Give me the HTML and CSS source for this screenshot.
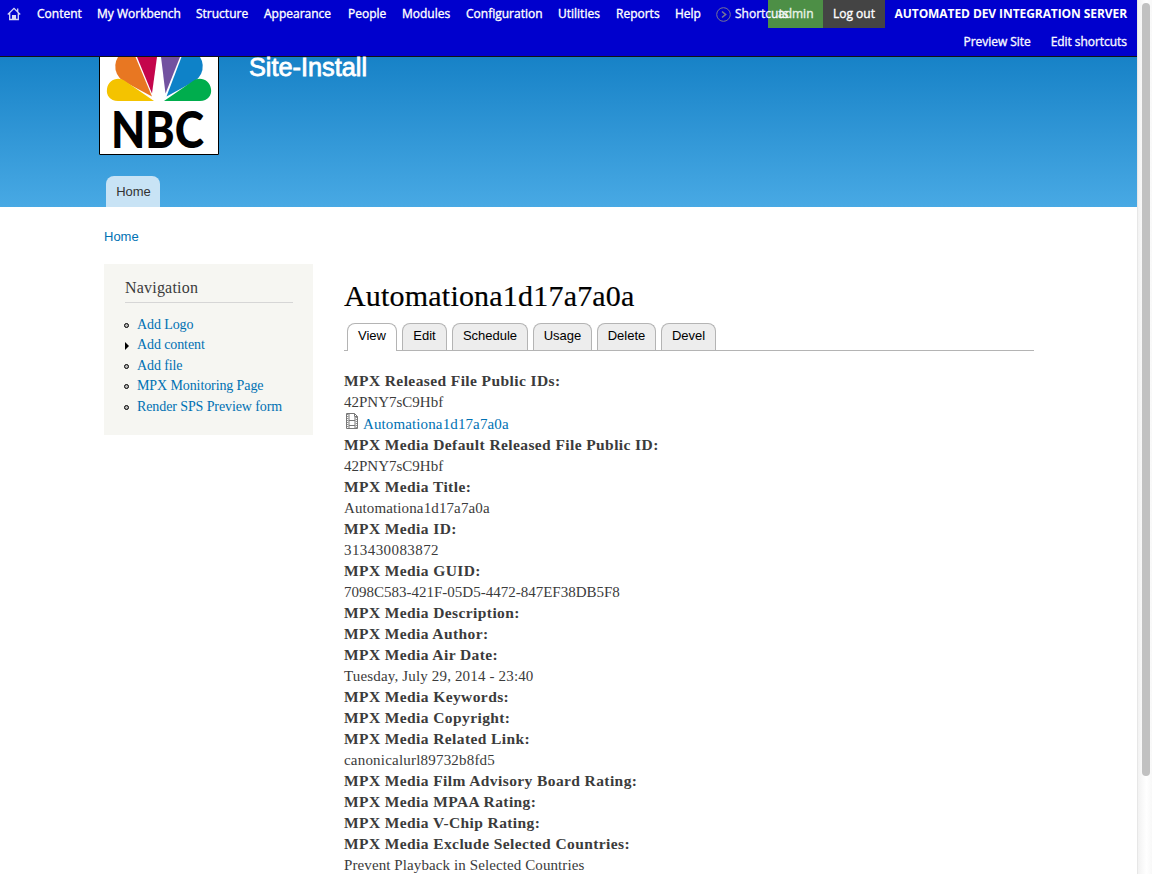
FILE: index.html
```html
<!DOCTYPE html>
<html lang="en">
<head>
<meta charset="utf-8">
<title>Automationa1d17a7a0a | Site-Install</title>
<link rel="stylesheet" href="styles.css">
</head>
<body>
<div class="window">
<div class="page">
  <div class="toolbar">
    <div class="toolbar-row">
      <a class="home" aria-label="Home"><svg width="14" height="14" viewBox="0 0 14 14" fill="none" stroke="#d8d8f5" stroke-width="1.3"><path d="M.8 7.5 7 1.4l6.2 6.1M2.7 6.3v6.2h8.6V6.3M10.7 4.8V1.6"/><path d="M5.6 12.4V8.6h2.8v3.8" fill="#d8d8f5"/></svg></a>
      <nav class="menu">
        <a class="m1">Content</a><a class="m2">My Workbench</a><a class="m3">Structure</a><a class="m4">Appearance</a><a class="m5">People</a><a class="m6">Modules</a><a class="m7">Configuration</a><a class="m8">Utilities</a><a class="m9">Reports</a><a class="m10">Help</a>
      </nav>
      <a class="shortcuts"><svg width="15" height="15" viewBox="0 0 15 15" fill="none" stroke="#777795"><circle cx="7.5" cy="7.5" r="6.8"/><path d="m6 4.5 3.6 3L6 10.5" stroke-width="1.6"/></svg><span>Shortcuts</span></a>
      <div class="user"><a class="admin">admin</a><a class="logout">Log out</a></div>
      <div class="server">AUTOMATED DEV INTEGRATION SERVER</div>
    </div>
    <div class="toolbar-row second"><a>Preview Site</a><a>Edit shortcuts</a></div>
  </div>
  <header class="header">
    <div class="brand">
      <svg class="logo" width="120" height="98" viewBox="0 0 120 98">
        <path fill="#fff" d="M0 0h120v98H0z"/>
        <path fill="#e87722" d="M19 0Q14 8 18 17Q20 21 24 24L53 39.500 36.500 0z"/>
        <path fill="#c4054c" d="M38 0h20l-5 36.500z"/>
        <path fill="#7252a0" d="M62 0h19L66.500 36.500z"/>
        <path fill="#0e82c8" d="M82.500 0H101Q106 8 102 17Q100 21 96 24L67.500 39.500z"/>
        <path fill="#f4c300" d="M55 44H19C11 44 7 38 8 32c1-9 11-13 18-8z"/>
        <path fill="#00ad4d" d="M65 44h36c8 0 12-6 11-12-1-9-11-13-18-8z"/>
        <text x="12" y="91" class="nbc" textLength="93" lengthAdjust="spacingAndGlyphs">NBC</text>
        <path fill="none" stroke="#000" d="M.5 0v97.500h119V0"/>
      </svg>
      <div class="site-name">Site-Install</div>
    </div>
    <a class="main-tab">Home</a>
  </header>
  <div class="breadcrumb"><a>Home</a></div>
  <div class="columns">
    <aside class="sidebar">
      <h2>Navigation</h2>
      <ul>
        <li>Add Logo</li>
        <li class="closed">Add content</li>
        <li>Add file</li>
        <li>MPX Monitoring Page</li>
        <li>Render SPS Preview form</li>
      </ul>
    </aside>
    <main class="content">
      <h1>Automationa1d17a7a0a</h1>
      <div class="tabs"><a class="active">View</a><a class="edit">Edit</a><a class="schedule">Schedule</a><a class="usage">Usage</a><a class="delete">Delete</a><a class="devel">Devel</a></div>
      <div class="fields">
        <b>MPX Released File Public IDs:</b>
        <p>42PNY7sC9Hbf</p>
        <p class="file"><svg width="14" height="17" viewBox="0 0 14 17" fill="none" stroke="#777"><path d="M1.500.500h8l3 3v12h-11zM9.500.500v3h3M4 1v14M10 4v11M4 7.500h6M4 12.500h6"/><path d="M2.700 1v14M11.300 4v11" stroke-dasharray="1 1"/></svg><a>Automationa1d17a7a0a</a></p>
        <b>MPX Media Default Released File Public ID:</b>
        <p>42PNY7sC9Hbf</p>
        <b>MPX Media Title:</b>
        <p class="auto">Automationa1d17a7a0a</p>
        <b>MPX Media ID:</b>
        <p class="num">313430083872</p>
        <b>MPX Media GUID:</b>
        <p>7098C583-421F-05D5-4472-847EF38DB5F8</p>
        <b>MPX Media Description:</b>
        <b>MPX Media Author:</b>
        <b>MPX Media Air Date:</b>
        <p class="date">Tuesday, July 29, 2014 - 23:40</p>
        <b>MPX Media Keywords:</b>
        <b>MPX Media Copyright:</b>
        <b>MPX Media Related Link:</b>
        <p class="url">canonicalurl89732b8fd5</p>
        <b>MPX Media Film Advisory Board Rating:</b>
        <b>MPX Media MPAA Rating:</b>
        <b>MPX Media V-Chip Rating:</b>
        <b>MPX Media Exclude Selected Countries:</b>
        <p class="prevent">Prevent Playback in Selected Countries</p>
      </div>
    </main>
  </div>
</div>
<div class="scrollbar"><div class="thumb"></div></div>
</div>
</body>
</html>
```

FILE: styles.css
```css
* { box-sizing: border-box; }
body { margin: 0; background: #fff; color: #3b3b3b; font-family: "Liberation Serif", serif; overflow: hidden; }
h1, h2, p, ul { margin: 0; padding: 0; font-weight: normal; }
.window { display: flex; height: 874px; overflow: hidden; }
.page { width: 1137px; }
.toolbar { height: 57px; background: #0000cd; border-bottom: 1px solid #111; color: #fff; font: 12px/28px "Open Sans", sans-serif; -webkit-text-stroke: .35px #fff; }
.toolbar-row { display: flex; height: 28px; white-space: nowrap; }
.home { width: 37px; padding: 7px 0 0 7px; line-height: 0; }
.menu { display: flex; width: 679px; }
.m1 { width: 60px; } .m2 { width: 99px; } .m3 { width: 68px; } .m4 { width: 84px; } .m5 { width: 54px; }
.m6 { width: 64px; } .m7 { width: 92px; } .m8 { width: 58px; } .m9 { width: 59px; }
.shortcuts { display: flex; align-items: center; gap: 4px; width: 52px; position: relative; z-index: 1; color: #eef; }
.shortcuts svg { flex: none; }
.user { display: flex; }
.admin { width: 55px; padding-left: 10px; background: #4d8f46; color: #e8f3e6; -webkit-text-stroke-color: #e8f3e6; }
.logout { width: 62px; padding-left: 10px; background: #444; }
.server { flex: 1; padding-right: 10px; text-align: right; font-weight: 700; letter-spacing: -.08px; -webkit-text-stroke: 0; }
.second { justify-content: flex-end; gap: 20px; padding-right: 10px; color: #f0f0ff; letter-spacing: -.05px; }
.header { display: flex; flex-direction: column; align-items: flex-start; justify-content: space-between; height: 150px; padding-left: 99px; background: linear-gradient(#1782c7, #48a9e4); }
.brand { display: flex; gap: 30px; }
.logo { display: block; overflow: visible; }
.nbc { font: 900 51px Lato, sans-serif; fill: #000; }
.site-name { height: 20px; color: #fff; font: 25.300px/20px "Liberation Sans", Arial, sans-serif; -webkit-text-stroke: .8px #fff; }
.main-tab { width: 54px; height: 31px; margin-left: 7px; padding-left: 1px; border-radius: 8px 8px 0 0; background: #c8e3f5; color: #333; text-align: center; font: 13px/31px "Liberation Sans", Arial, sans-serif; }
.breadcrumb { height: 57px; padding: 22px 0 0 104px; color: #0071b3; font: 13px/15px "Liberation Sans", Arial, sans-serif; }
.columns { display: flex; gap: 31px; padding-left: 104px; }
.sidebar { width: 209px; height: 171px; padding: 15px 20px 0 21px; background: #f6f6f2; }
.sidebar h2 { height: 24px; border-bottom: 1px solid #d6d6d6; font-size: 16px; line-height: 18px; letter-spacing: .2px; }
.sidebar ul { padding-top: 11.700px; list-style: none; }
.sidebar li { display: flex; align-items: center; height: 20.500px; color: #0071b3; font-size: 14px; letter-spacing: -.1px; white-space: nowrap; }
.sidebar li::before { content: ""; box-sizing: border-box; width: 5px; height: 5px; margin: 1px 8px 0 -1px; border: 1px solid #000; border-radius: 50%; background: #bbb; }
.sidebar li.closed::before { width: 4px; height: 8px; margin-left: 0; border: 4px solid transparent; border-left-color: #000; border-right: 0; border-radius: 0; background: none; }
.content { width: 690px; padding-top: 14px; }
h1 { height: 45px; color: #000; font-size: 30px; line-height: 35px; letter-spacing: .2px; -webkit-text-stroke: .2px #000; }
.tabs { display: flex; gap: 5px; height: 28px; padding-left: 3px; border-bottom: 1px solid #b4b4b4; }
.tabs a { height: 27px; border: 1px solid #b4b4b4; border-bottom: 0; border-radius: 8px 8px 0 0; background: #ededed; color: #000; text-align: center; font: 13px/24px "Liberation Sans", Arial, sans-serif; }
.tabs .active { width: 50px; height: 28px; background: #fff; }
.tabs .edit { width: 45px; }
.tabs .schedule { width: 76px; }
.tabs .usage, .tabs .delete { width: 59px; }
.tabs .devel { width: 55px; }
.fields { padding-top: 20px; font-size: 15px; line-height: 21px; white-space: nowrap; }
.fields b, .fields p { display: block; height: 21px; }
.fields b { font-size: 15.500px; line-height: 19px; letter-spacing: .4px; }
.fields .auto, .fields .file { letter-spacing: .12px; }
.fields .num { letter-spacing: .42px; }
.fields .date { letter-spacing: .16px; }
.fields .url { letter-spacing: .2px; }
.fields .prevent { letter-spacing: .1px; }
.fields .file { display: flex; gap: 4px; height: 22px; padding-left: 1px; line-height: 23px; color: #0071b3; }
.scrollbar { width: 15px; padding: 3px 0 0 4px; border-left: 1px solid #e7e7e7; background: linear-gradient(90deg, #f2f2f2, #fff 60%, #f8f8f8); }
.thumb { width: 8px; height: 773px; border-radius: 4px; background: #c1c1c1; }
```
